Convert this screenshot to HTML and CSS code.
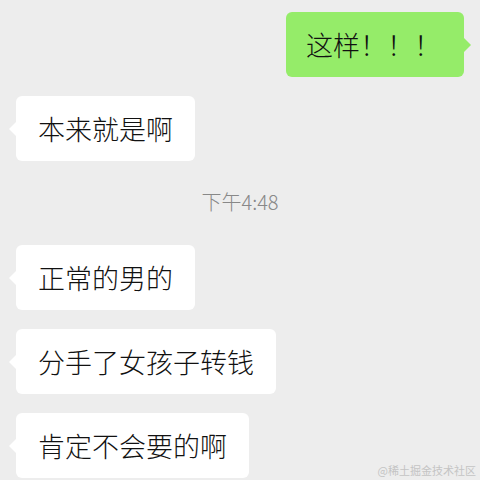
FILE: index.html
```html
<!DOCTYPE html>
<html lang="zh">
<head>
<meta charset="utf-8">
<link rel="stylesheet" href="styles.css">
</head>
<body>
<div class="chat">
  <div class="row right"><div class="bubble green">这样！！！</div></div>
  <div class="row left"><div class="bubble white">本来就是啊</div></div>
  <div class="time">下午4:48</div>
  <div class="row left"><div class="bubble white">正常的男的</div></div>
  <div class="row left"><div class="bubble white">分手了女孩子转钱</div></div>
  <div class="row left"><div class="bubble white">肯定不会要的啊</div></div>
</div>
<div class="watermark">@稀土掘金技术社区</div>
</body>
</html>
```

FILE: styles.css
```css
html, body {
  margin: 0;
  padding: 0;
  width: 480px;
  height: 480px;
  overflow: hidden;
  background: #ededed;
  font-family: "Noto Sans CJK SC", "Noto Sans", sans-serif;
}
.chat {
  display: flex;
  flex-direction: column;
  gap: 19px;
  padding: 12px 16px 0 16px;
}
.row {
  display: flex;
}
.row.right {
  justify-content: flex-end;
}
.bubble {
  position: relative;
  font-size: 27px;
  font-weight: 300;
  line-height: 27px;
  height: 27px;
  padding: 19px 22px 19px 22px;
  border-radius: 6px;
  color: #111;
  white-space: nowrap;
}
.green {
  background: #95ec69;
  padding-left: 20px;
  padding-right: 23px;
}
.white {
  background: #ffffff;
}
.white::before {
  content: "";
  position: absolute;
  left: -7px;
  top: 50%;
  margin-top: -7px;
  border-style: solid;
  border-width: 7px 7px 7px 0;
  border-color: transparent #ffffff transparent transparent;
}
.green::after {
  content: "";
  position: absolute;
  right: -7px;
  top: 50%;
  margin-top: -7px;
  border-style: solid;
  border-width: 7px 0 7px 7px;
  border-color: transparent transparent transparent #95ec69;
}
.time {
  text-align: center;
  font-size: 20px;
  line-height: 22px;
  font-weight: 300;
  color: #888888;
  margin: 11px 0 13px 0;
}
.watermark {
  position: absolute;
  right: 4px;
  bottom: 3px;
  font-size: 11px;
  line-height: 13px;
  color: #c4c4c4;
  font-family: "Noto Sans CJK SC", serif;
}
```
